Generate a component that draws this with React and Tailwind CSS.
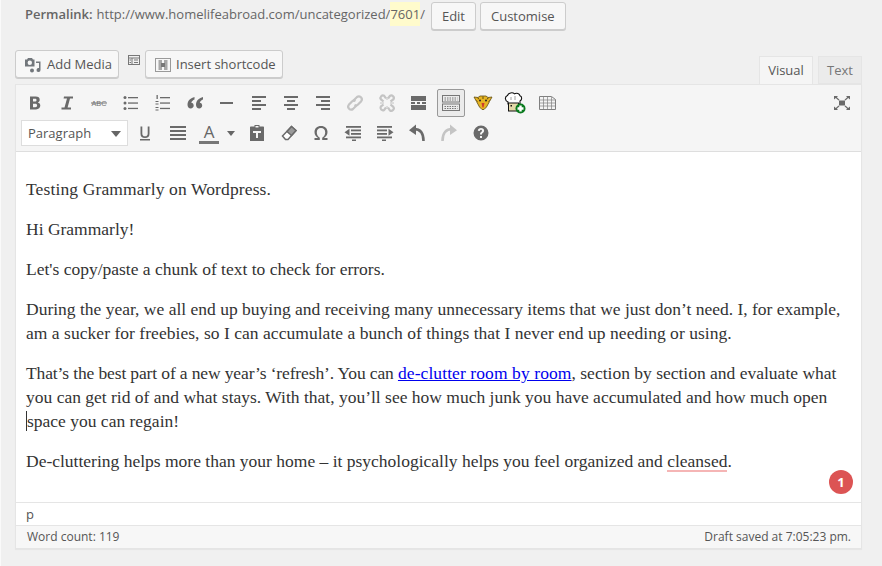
import React from "react";

const uiFont = "font-['Open_Sans',sans-serif]";

// Plain 20px toolbar glyphs, same grey as the wp editor
const Ico = ({ children, muted, size = 20 }) => (
  <svg width={size} height={size} viewBox="0 0 20 20" fill={muted ? "#c4c4c4" : "#6a6a6a"}>
    {children}
  </svg>
);

const Lines = ({ rows }) => (
  <Ico>
    {rows.map(([x, y, w, h = 2], i) => (
      <rect key={i} x={x} y={y} width={w} height={h} />
    ))}
  </Ico>
);

const icons = {
  bold: <Ico><path d="M5 3.500h5.800c2.500 0 3.900 1.200 3.900 3.200 0 1.400-.7 2.300-1.900 2.800 1.600.4 2.500 1.500 2.500 3.100 0 2.300-1.600 3.900-4.300 3.900H5zm3 2.300v2.800h2c1 0 1.500-.5 1.500-1.400s-.5-1.400-1.500-1.400zm0 5v3.400h2.300c1.100 0 1.800-.6 1.800-1.700s-.7-1.700-1.800-1.700z" /></Ico>,
  italic: <Ico><path d="M7 3.500h9v2h-3l-2.400 9H14v2H4.500v-2h3L10 5.500H6.600z" /></Ico>,
  strike: <svg width="20" height="20" viewBox="0 0 20 20" fill="#747474"><text x="10" y="13" fontSize="8" textAnchor="middle" fontFamily="Liberation Sans, sans-serif" textLength="15" lengthAdjust="spacingAndGlyphs">ABC</text><rect x="2" y="9.500" width="16" height="1" /></svg>,
  bullist: <Ico><circle cx="4" cy="4.500" r="1.500" /><circle cx="4" cy="10" r="1.500" /><circle cx="4" cy="15.500" r="1.500" /><rect x="7" y="4" width="10" height="1.300" /><rect x="7" y="9.400" width="10" height="1.300" /><rect x="7" y="14.800" width="10" height="1.300" /></Ico>,
  numlist: <Ico><rect x="7" y="4" width="10" height="1.300" /><rect x="7" y="9.400" width="10" height="1.300" /><rect x="7" y="14.800" width="10" height="1.300" /><rect x="3.500" y="2" width="1.300" height="4" /><rect x="2.500" y="8" width="3" height="1" /><rect x="2.500" y="10.500" width="3" height="1" /><rect x="2.500" y="14" width="3" height="1" /><rect x="2.500" y="16.500" width="3" height="1" /></Ico>,
  quote: <Ico><path d="M9.500 4C6 4.800 2.500 7.300 2.500 11.800c0 2.400 1.400 3.700 3.200 3.700 1.700 0 3-1.300 3-2.900S7.700 9.900 6.300 9.800C6.500 8.300 7.900 7.100 9.500 6.400zM18 4c-3.500.8-7 3.300-7 7.800 0 2.400 1.400 3.700 3.200 3.700 1.700 0 3-1.300 3-2.900s-1-2.700-2.400-2.800c.2-1.500 1.600-2.700 3.200-3.400z" /></Ico>,
  hr: <Lines rows={[[3, 9, 13, 2]]} />,
  alignleft: <Lines rows={[[3, 3, 14], [3, 7, 9], [3, 11, 14], [3, 15, 9]].map((r) => [...r, 2])} />,
  aligncenter: <Lines rows={[[3, 3, 14], [6, 7, 8], [3, 11, 14], [6, 15, 8]].map((r) => [...r, 2])} />,
  alignright: <Lines rows={[[3, 3, 14], [8, 7, 9], [3, 11, 14], [8, 15, 9]].map((r) => [...r, 2])} />,
  link: <svg width="20" height="20" viewBox="0 0 20 20" fill="none" stroke="#c4c4c4" strokeWidth="2.200"><path d="M8.500 7.500 12 4a3 3 0 0 1 4.200 4.200L13 11.500a3 3 0 0 1-3.500.6" /><path d="M11.500 12.500 8 16a3 3 0 0 1-4.200-4.200L7 8.500a3 3 0 0 1 3.500-.6" /></svg>,
  unlink: <svg width="20" height="20" viewBox="0 0 20 20" fill="none" stroke="#c4c4c4" strokeWidth="2.200"><path d="M6.500 8.500 3.800 6.200A2.500 2.500 0 0 1 7.200 2.800L9 5.500" /><path d="M11 5.500 12.800 3a2.500 2.500 0 0 1 3.500 3.500L13.500 8.500" /><path d="M13.500 11.500l2.800 2.300a2.500 2.500 0 0 1-3.500 3.500L11 14.500" /><path d="M9 14.500 7.200 17a2.500 2.500 0 0 1-3.400-3.400l2.700-2.100" /><path d="M10 7V4M10 16v-3M7 10H3M17 10h-4" strokeWidth="1" /></svg>,
  more: <Lines rows={[[2, 3, 15, 5], [2, 9, 4, 2], [8, 9, 3, 2], [13, 9, 4, 2], [2, 12, 15, 5]]} />,
  underline: <Ico><path d="M5.500 3.500h1.800v7c0 1.900.9 2.800 2.700 2.800s2.700-.9 2.700-2.800v-7h1.800v7.200c0 2.900-1.600 4.300-4.500 4.300s-4.500-1.400-4.500-4.300z" /><rect x="5" y="16" width="10" height="1.500" /></Ico>,
  justify: <Lines rows={[[2, 3, 16, 2], [2, 7, 16, 2], [2, 11, 16, 2], [2, 15, 16, 2]]} />,
  paste: <Ico><path d="M7.500 2h5v1.500H16c.6 0 1 .4 1 1V18H3V4.500c0-.6.4-1 1-1h3.500zM8.500 3v1.500h3V3zM6 8v2h3v5h2v-5h3V8z" fillRule="evenodd" /></Ico>,
  eraser: <svg width="20" height="20" viewBox="0 0 20 20" fill="none" stroke="#6a6a6a" strokeWidth="1.500"><path d="M12.500 3.500 17 7.500 9 16.500H6.500L3.500 13z" fill="#ffffff" /><path d="M12.500 3.500 17 7.500 12.500 12.500 8 8.500z" fill="#9a9a9a" /></svg>,
  omega: <Ico><path d="M10 3c4 0 6.500 2.600 6.500 6 0 2.800-1.400 4.600-3.500 6h3.500v2H11.200v-2.300c1.900-1 3-2.900 3-5.500S12.700 4.900 10 4.900 5.800 6.600 5.800 9.200s1.100 4.500 3 5.500V17H3.500v-2H7c-2.100-1.400-3.500-3.200-3.500-6 0-3.400 2.500-6 6.500-6z" /></Ico>,
  outdent: <Ico><rect x="3" y="3" width="15" height="1.800" /><rect x="8" y="6.500" width="10" height="1.800" /><rect x="8" y="10" width="10" height="1.800" /><rect x="3" y="13.500" width="15" height="1.800" /><rect x="9" y="16.500" width="4" height="1.500" /><path d="M1.500 9.200 6.500 5.700v7z" /></Ico>,
  indent: <Ico><rect x="2" y="3" width="15" height="1.800" /><rect x="2" y="6.500" width="10" height="1.800" /><rect x="2" y="10" width="10" height="1.800" /><rect x="2" y="13.500" width="15" height="1.800" /><rect x="7" y="16.500" width="4" height="1.500" /><path d="M18.500 9.200 13.500 5.700v7z" /></Ico>,
  undo: <svg width="20" height="20" viewBox="0 0 20 20" fill="#6a6a6a"><path d="M9 1.500 2 7.200 9 12z" /><path d="M7 6c5.500 0 9.500 3.500 9.500 12" fill="none" stroke="#6a6a6a" strokeWidth="2.600" /></svg>,
  redo: <svg width="20" height="20" viewBox="0 0 20 20" fill="#c4c4c4"><path d="M11 1.500 18 7.200 11 12z" /><path d="M13 6C7.500 6 3.500 9.500 3.500 18" fill="none" stroke="#c4c4c4" strokeWidth="2.600" /></svg>,
  help: <Ico><path fillRule="evenodd" d="M10 2.500a7.500 7.500 0 1 1 0 15 7.500 7.500 0 0 1 0-15zM9 13v2h2v-2zM10 5c-1.800 0-3 1-3.200 2.700l2 .3c.1-.8.500-1.200 1.200-1.200.6 0 1 .3 1 .9 0 .5-.3.800-.9 1.300-.8.600-1.100 1.200-1.100 2.500h2c0-.8.200-1.100.8-1.500.8-.6 1.300-1.300 1.300-2.400C13.100 6 11.900 5 10 5z" /></Ico>,
  fullscreen: <svg width="18" height="16" viewBox="0 0 18 16" fill="#6a6a6a"><rect x="6" y="5.500" width="6" height="5" /><path d="M1 1h4L3.800 2.200 6.500 4.800 5.500 5.500 2.800 3 1 4.500zM17 1h-4l1.200 1.200L11.500 4.800l1 .7L15.200 3 17 4.500zM1 15h4l-1.200-1.200 2.700-2.600-1-.7L2.800 13 1 11.500zM17 15h-4l1.200-1.200-2.700-2.600 1-.7 2.700 2.500 1.800-1.500z" /></svg>,
};

const KitchenSink = () => (
  <svg width="20" height="20" viewBox="0 0 20 20" fill="none" stroke="#777777">
    <rect x="1.500" y="2.500" width="17" height="6.500" />
    <rect x="1.500" y="11" width="17" height="6.500" />
    <path d="M3.500 5h13M3.500 7h13M3.500 13.500h13M3.500 15.500h13" strokeDasharray="1.500 1" />
  </svg>
);

const Tiger = () => (
  <svg width="20" height="16" viewBox="0 0 20 16">
    <path d="M1 2l4 .5L7 1h6l2 1.500L19 2l-2.500 4.500-3 5.500-2.500 2.500H9L6.500 12l-3-5.500z" fill="#e6b422" stroke="#5f4b10" strokeWidth=".8" />
    <circle cx="7" cy="5.500" r="1" fill="#222222" />
    <circle cx="13" cy="5.500" r="1" fill="#222222" />
    <path d="M8.500 8h3l-1 4.500h-1z" fill="#cc3a2c" />
    <path d="M4.500 3l1.500 1M15.500 3 14 4M10 1.500V4M3.500 5.500l1 1M16.500 5.500l-1 1" stroke="#5f4b10" />
  </svg>
);

const Chef = () => (
  <svg width="22" height="22" viewBox="0 0 22 22">
    <path d="M4 10C.8 9 .5 4.500 3.500 3.500 4.500.8 8.500 0 10.500 1.800c2.200-1.200 5-.2 5.500 2 2.200.7 2.200 4 0 5.200V12H4z" fill="#ffffff" stroke="#111111" strokeWidth="1.100" />
    <path d="M7 5v3M11 4v4" stroke="#888888" strokeWidth=".8" />
    <rect x="4.500" y="11" width="10" height="8" fill="#e4d9a8" stroke="#111111" strokeWidth="1" />
    <rect x="6.500" y="13" width="1.500" height="1.500" fill="#111111" />
    <circle cx="16.500" cy="16.500" r="5" fill="#0a7a1e" />
    <path d="M13.500 15.300h1.800v-1.800h2.400v1.800h1.800v2.400h-1.800v1.800h-2.400v-1.800h-1.800z" fill="#ffffff" />
  </svg>
);

const TableIcon = () => (
  <svg width="17" height="14" viewBox="0 0 17 14" fill="#f4f4f4" stroke="#808080">
    <path d="M.5.500h12l4 3v10H.5z" />
    <path d="M.5 4h16M.5 7h16M.5 10h16M4.500 1v12.500M8.500 1v12.500M12.500 1v12.500" strokeWidth=".7" />
  </svg>
);

const ToolBtn = ({ children, active }) => (
  <div
    className={`w-[28px] h-[28px] mr-[4px] flex items-center justify-center rounded-[2px] border ${
      active ? "bg-[#ebebeb] border-[#999999]" : "border-transparent"
    }`}
  >
    {children}
  </div>
);

const rowOne = ["bold", "italic", "strike", "bullist", "numlist", "quote", "hr", "alignleft", "aligncenter", "alignright", "link", "unlink", "more"];
const rowTwoRest = ["paste", "eraser", "omega", "outdent", "indent", "undo", "redo", "help"];

const Button = ({ children, className = "" }) => (
  <div className={`h-[28px] flex items-center whitespace-nowrap bg-[#f7f7f7] border border-[#cccccc] rounded-[3px] text-[13px] text-[#555555] shadow-[0_1px_0_#cccccc] ${className}`}>
    {children}
  </div>
);

const paragraphClass = "mb-[16px]";

export default function App() {
  return (
    <div className={`w-[882px] h-[566px] overflow-hidden bg-[#f0f0f0] border-l border-[#fafafa] ${uiFont}`}>
      {/* permalink row */}
      <div className="flex items-start pl-[24px] pt-[2px] h-[30px]">
        <div className="text-[13px] leading-[24px] text-[#666666] flex">
          <b className="font-semibold mr-[4px]">Permalink:</b>
          <span>http://www.homelifeabroad.com/uncategorized/</span>
          <span className="bg-[#fffbcc]">7601</span>
          <span>/</span>
        </div>
        <Button className="ml-[6px] px-[10px] pt-[1px]">Edit</Button>
        <Button className="ml-[4px] px-[10px] pt-[1px]">Customise</Button>
      </div>

      {/* media buttons and tabs */}
      <div className="flex items-end justify-between mt-[20px] pl-[14px] pr-[20px]">
        <div className="flex items-start pb-[6px]">
          <Button className="pl-[7px] w-[104px] pt-[1px]">
            <svg width="20" height="20" viewBox="0 0 20 20" fill="#72777c" className="mr-[4px] shrink-0">
              <path fillRule="evenodd" d="M2 4.500h2l1-1.500h4l1 1.500h1.500v7H2zM6.800 5.500a2.200 2.200 0 1 0 0 4.400 2.200 2.200 0 0 0 0-4.400z" />
              <path d="M13 6.500h4.500V15a2 2 0 1 1-1.500-1.900V8h-3z" />
              <circle cx="9" cy="15.500" r="2" />
            </svg>
            Add Media
          </Button>
          <svg width="14" height="14" viewBox="0 0 14 14" fill="none" stroke="#777777" className="ml-[8px] mr-[4px] mt-[4px]">
            <rect x="1.500" y="1.500" width="11" height="9" />
            <path d="M1.500 4h11M5 4v6.500M7 6h4M7 8.500h4M2.500 6h1.500M2.500 8.500h1.500" />
          </svg>
          <Button className="pl-[7px] w-[138px] pt-[1px]">
            <svg width="20" height="20" viewBox="0 0 20 20" className="mr-[3px] shrink-0">
              <rect x="2.500" y="3.500" width="15" height="13" fill="none" stroke="#9a9a9a" />
              <path d="M5.500 5h3.500v10H5.500zM11 5h3.500v10H11z" fill="#a8a8a8" />
              <rect x="8" y="8" width="4" height="4" fill="#777777" />
            </svg>
            Insert shortcode
          </Button>
        </div>
        <div className="flex items-end text-[13px] leading-[19px]">
          <div className="h-[29px] w-[54px] -mb-[1px] flex items-center justify-center bg-[#f5f5f5] border border-[#e5e5e5] border-b-[#f5f5f5] text-[#555555] relative">
            Visual
          </div>
          <div className="h-[28px] w-[44px] ml-[5px] flex items-center justify-center bg-[#ebebeb] border border-[#e5e5e5] text-[#777777]">
            Text
          </div>
        </div>
      </div>

      {/* editor */}
      <div className="ml-[14px] w-[847px] border border-[#e5e5e5] bg-white shadow-[0_1px_1px_rgba(0,0,0,0.04)] relative">
        <div className="bg-[#f5f5f5] h-[67px] border-b border-[#dedede] pl-[5px] pr-[3px] pt-[3px]">
          <div className="flex h-[30px] items-center">
            {rowOne.map((name) => (
              <ToolBtn key={name}>{icons[name]}</ToolBtn>
            ))}
            <ToolBtn active><KitchenSink /></ToolBtn>
            <ToolBtn><Tiger /></ToolBtn>
            <ToolBtn><Chef /></ToolBtn>
            <ToolBtn><TableIcon /></ToolBtn>
            <div className="ml-auto -mr-[2px]"><ToolBtn>{icons.fullscreen}</ToolBtn></div>
          </div>
          <div className="flex h-[30px] items-center">
            <div className="w-[107px] h-[26px] pt-[1px] bg-white border border-[#dddddd] flex items-center justify-between pl-[6px] pr-[6px] text-[13px] text-[#555555] mr-[3px]">
              Paragraph
              <svg width="10" height="6" viewBox="0 0 10 6" fill="#666666"><path d="M0 0h10L5 6z" /></svg>
            </div>
            <ToolBtn>{icons.underline}</ToolBtn>
            <div className="ml-[1px]"><ToolBtn>{icons.justify}</ToolBtn></div>
            <div className="w-[26px] h-[28px] flex flex-col items-center justify-center">
              <span className="text-[17px] leading-[16px] text-[#666666] mt-[1px]">A</span>
              <span className="w-[20px] h-[3px] bg-[#777777] mt-[1px]" />
            </div>
            <svg width="8" height="5" viewBox="0 0 8 5" fill="#666666" className="mx-[5px]"><path d="M0 0h8L4 5z" /></svg>
            <div className="w-[3px]" />
            {rowTwoRest.map((name) => (
              <ToolBtn key={name}>{icons[name]}</ToolBtn>
            ))}
          </div>
        </div>

        <div className="h-[350px] px-[10px] pt-[25px] font-['Liberation_Serif',serif] text-[17.5px] leading-[24px] text-[#333333] relative">
          <p className={`${paragraphClass} tracking-[0.13px]`}>Testing Grammarly on Wordpress.</p>
          <p className={paragraphClass}>Hi Grammarly!</p>
          <p className={paragraphClass}>Let's copy/paste a chunk of text to check for errors.</p>
          <p className={paragraphClass}>
            During the year, we all end up buying and receiving many unnecessary items that we just don’t need. I, for example,
            <br />
            <span className="tracking-[0.04px]">am a sucker for freebies, so I can accumulate a bunch of things that I never end up needing or using.</span>
          </p>
          <p className={paragraphClass}>
            <span className="tracking-[-0.13px]">That’s the best part of a new year’s ‘refresh’. You can </span>
            <span className="text-[#0000ee] underline tracking-[0.09px]">de-clutter room by room</span>, section by section and evaluate what
            <br />
            you can get rid of and what stays. With that, you’ll see how much junk you have accumulated and how much open
            <br />
            <span className="border-l border-[#333333]">space you can regain!</span>
          </p>
          <p className={paragraphClass}>
            De-cluttering helps more than your home – it psychologically helps you feel organized and{" "}
            <span className="border-b-2 border-[#f5b5b5] leading-[18px] inline-block">cleansed</span>.
          </p>
          <div className={`absolute right-[8px] bottom-[8px] w-[24px] h-[24px] rounded-full bg-[#dc5454] text-white text-[13px] font-bold flex items-center justify-center ${uiFont}`}>
            1
          </div>
        </div>

        <div className="h-[23px] border-t border-[#e5e5e5] text-[13px] leading-[22px] text-[#555555] pl-[10px]">p</div>
        <div className="h-[23px] border-t border-[#e5e5e5] bg-[#f7f7f7] flex justify-between items-center pl-[11px] pr-[10px] text-[12px] text-[#555555]">
          <span>Word count: 119</span>
          <span>Draft saved at 7:05:23 pm.</span>
        </div>
      </div>
    </div>
  );
}
